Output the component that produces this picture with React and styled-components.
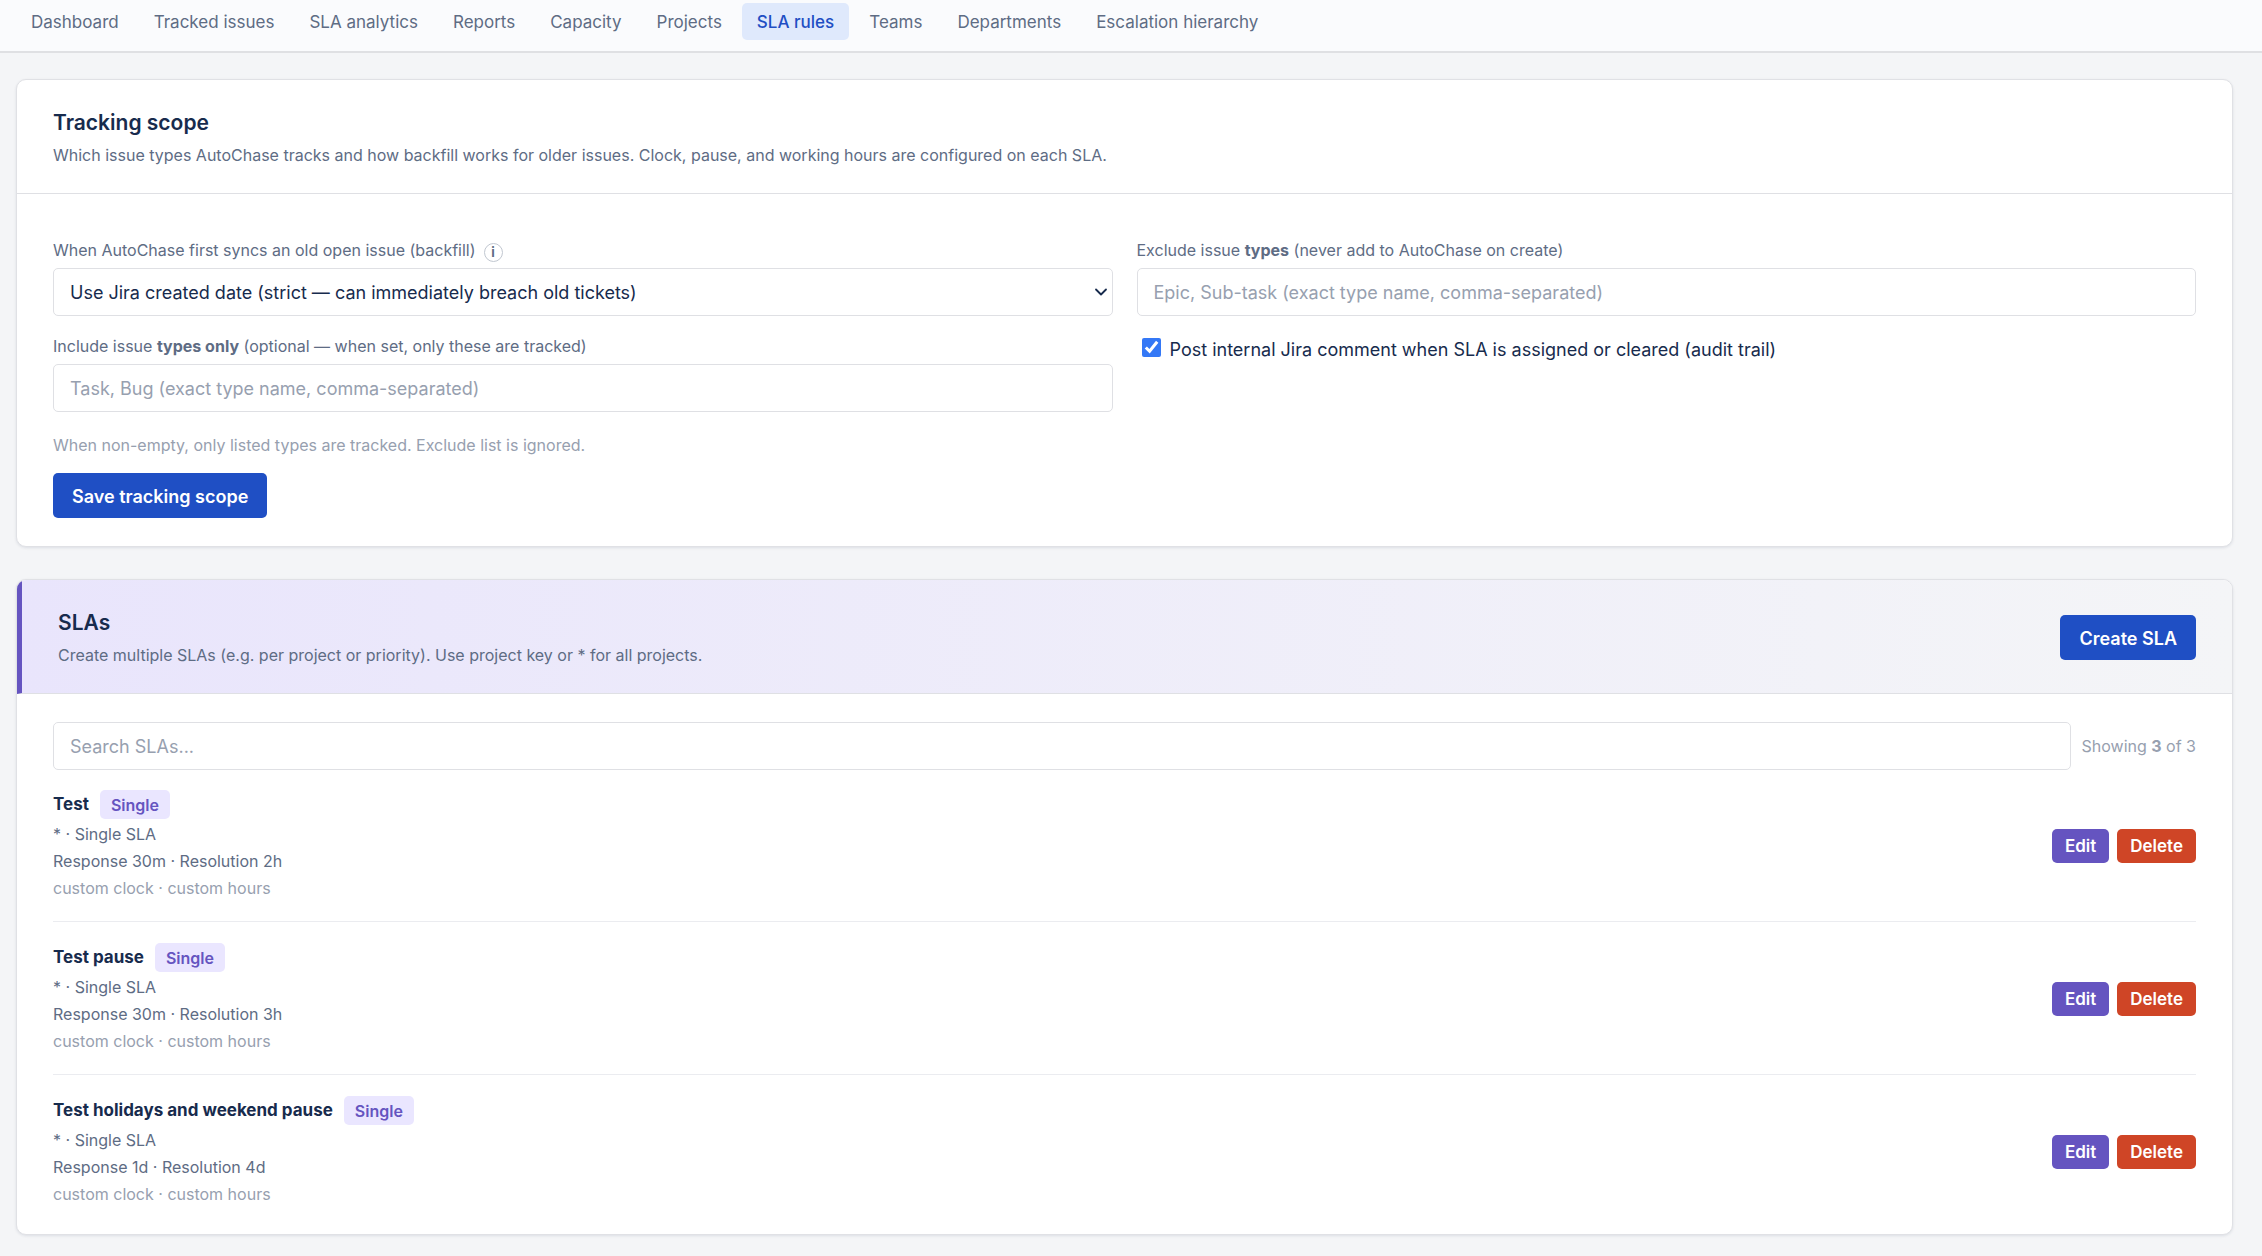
import {useState} from 'react';
import styled, {createGlobalStyle} from 'styled-components';
import {ChevronDown} from 'lucide-react';

const tabs = [
  'Dashboard',
  'Tracked issues',
  'SLA analytics',
  'Reports',
  'Capacity',
  'Projects',
  'SLA rules',
  'Teams',
  'Departments',
  'Escalation hierarchy',
];

const slas = [
  {name: 'Test', response: '30m', resolution: '2h'},
  {name: 'Test pause', response: '30m', resolution: '3h'},
  {name: 'Test holidays and weekend pause', response: '1d', resolution: '4d'},
];

function App() {
  const [search, setSearch] = useState('');
  const [audit, setAudit] = useState(true);
  const visible = slas.filter(sla =>
    sla.name.toLowerCase().includes(search.toLowerCase())
  );

  return (
    <>
      <GlobalStyle />
      <Navigation>
        {tabs.map(tab => (
          <Tab key={tab} href="#" $active={tab === 'SLA rules'}>
            {tab}
          </Tab>
        ))}
      </Navigation>
      <Main>
        <Card>
          <CardHeader>
            <div>
              <Title>Tracking scope</Title>
              <Subtitle>
                Which issue types AutoChase tracks and how backfill works for
                older issues. Clock, pause, and working hours are configured on
                each SLA.
              </Subtitle>
            </div>
          </CardHeader>
          <ScopeForm onSubmit={event => event.preventDefault()}>
            <FieldGrid>
              <div>
                <LabelRow>
                  <label htmlFor="backfill">
                    When AutoChase first syncs an old open issue (backfill)
                  </label>
                  <InfoButton type="button" aria-label="About backfill">
                    i
                  </InfoButton>
                </LabelRow>
                <SelectWrapper>
                  <Select id="backfill">
                    <option>
                      Use Jira created date (strict — can immediately breach old
                      tickets)
                    </option>
                  </Select>
                  <SelectArrow size={20} strokeWidth={2.2} />
                </SelectWrapper>
              </div>
              <div>
                <LabelRow>
                  <label htmlFor="exclude">
                    Exclude issue <b>types</b> (never add to AutoChase on create)
                  </label>
                </LabelRow>
                <Input
                  id="exclude"
                  placeholder="Epic, Sub-task (exact type name, comma-separated)"
                />
              </div>
              <div>
                <LabelRow>
                  <label htmlFor="include">
                    Include issue <b>types only</b> (optional — when set, only
                    these are tracked)
                  </label>
                </LabelRow>
                <Input
                  id="include"
                  placeholder="Task, Bug (exact type name, comma-separated)"
                />
              </div>
              <CheckLabel>
                <Checkbox
                  type="checkbox"
                  checked={audit}
                  onChange={() => setAudit(!audit)}
                />
                Post internal Jira comment when SLA is assigned or cleared
                (audit trail)
              </CheckLabel>
            </FieldGrid>
            <Hint>
              When non-empty, only listed types are tracked. Exclude list is
              ignored.
            </Hint>
            <PrimaryButton>Save tracking scope</PrimaryButton>
          </ScopeForm>
        </Card>

        <Card>
          <CardHeader $accent>
            <div>
              <Title>SLAs</Title>
              <Subtitle>
                Create multiple SLAs (e.g. per project or priority). Use project
                key or * for all projects.
              </Subtitle>
            </div>
            <PrimaryButton type="button">Create SLA</PrimaryButton>
          </CardHeader>
          <CardBody>
            <SearchRow>
              <Input
                aria-label="Search SLAs"
                placeholder="Search SLAs..."
                value={search}
                onChange={event => setSearch(event.target.value)}
              />
              <Count>
                Showing <b>{visible.length}</b> of {slas.length}
              </Count>
            </SearchRow>
            <SlaList>
              {visible.map(sla => (
                <SlaItem key={sla.name}>
                  <div>
                    <SlaName>
                      {sla.name}
                      <Badge>Single</Badge>
                    </SlaName>
                    <SlaText>* · Single SLA</SlaText>
                    <SlaText>
                      Response {sla.response} · Resolution {sla.resolution}
                    </SlaText>
                    <SlaText $muted>custom clock · custom hours</SlaText>
                  </div>
                  <Actions>
                    <SmallButton type="button" $color="#6554c0">
                      Edit
                    </SmallButton>
                    <SmallButton type="button" $color="#cf4526">
                      Delete
                    </SmallButton>
                  </Actions>
                </SlaItem>
              ))}
            </SlaList>
          </CardBody>
        </Card>
      </Main>
    </>
  );
}

const GlobalStyle = createGlobalStyle`
  * {
    box-sizing: border-box;
  }

  body {
    margin: 0;
    background-color: #f4f5f7;
    color: #172b4d;
    font-family: Inter, 'Liberation Sans', sans-serif;
    font-size: 18px;
    line-height: 27px;
  }

  button,
  input,
  select {
    font-family: inherit;
    color: inherit;
  }
`;

const Navigation = styled.nav`
  display: flex;
  gap: 5px;
  padding: 3px 16px 11px;
  background-color: #fafbfd;
  border-bottom: 2px solid #dfe0e3;
`;

const Tab = styled.a`
  padding: 6px 15px 4px;
  border-radius: 5px;
  font-size: 17px;
  font-weight: ${({$active}) => ($active ? 500 : 400)};
  color: ${({$active}) => ($active ? '#1f4fc4' : '#5e6c84')};
  background-color: ${({$active}) => ($active ? '#dfe9fc' : 'transparent')};
  text-decoration: none;
  white-space: nowrap;
`;

const Main = styled.main`
  display: grid;
  gap: 32px;
  padding: 26px 29px 22px 16px;
`;

const Card = styled.section`
  overflow: hidden;
  background-color: #fff;
  border: 1px solid #e0e1e5;
  border-radius: 10px;
  box-shadow: 0 1px 3px rgba(9, 30, 66, 0.1);
`;

const CardHeader = styled.header`
  display: flex;
  align-items: center;
  justify-content: space-between;
  padding: 28px 36px 26px;
  border-bottom: 1px solid #dfe0e4;
  ${({$accent}) =>
    $accent &&
    `
    border-left: 5px solid #6554c0;
    background: linear-gradient(90deg, #e9e5fc 0%, #f4f5f7 100%);
  `}
`;

const Title = styled.h2`
  margin: 0 0 5px;
  font-size: 21px;
  line-height: 30px;
  font-weight: 600;
`;

const Subtitle = styled.p`
  margin: 0;
  font-size: 16px;
  line-height: 24px;
  color: #5e6c84;
`;

const CardBody = styled.div`
  padding: 28px 36px 26px;
`;

const ScopeForm = styled.form`
  padding: 44px 36px 28px;
`;

const FieldGrid = styled.div`
  display: grid;
  grid-template-columns: 1fr 1fr;
  gap: 18px 24px;
`;

const LabelRow = styled.div`
  display: flex;
  align-items: center;
  gap: 8px;
  margin-bottom: 6px;
  font-size: 16px;
  line-height: 24px;
  color: #5e6c84;
`;

const InfoButton = styled.button`
  width: 19px;
  height: 19px;
  margin-top: 4px;
  padding: 0;
  border: 1px solid #c1c7d0;
  border-radius: 50%;
  background: none;
  color: #5e6c84;
  font-size: 13px;
  line-height: 17px;
  font-weight: 700;
`;

const Input = styled.input`
  display: block;
  width: 100%;
  height: 48px;
  padding: 0 16px;
  border: 1px solid #dfe0e4;
  border-radius: 5px;
  background-color: #fff;
  font-size: 18px;

  &::placeholder {
    color: #97a0af;
    opacity: 1;
  }
`;

const SelectWrapper = styled.div`
  position: relative;
`;

const Select = styled.select`
  display: block;
  appearance: none;
  width: 100%;
  height: 48px;
  padding: 0 32px 0 16px;
  border: 1px solid #dfe0e4;
  border-radius: 5px;
  background-color: #fff;
  font-size: 18px;
`;

const SelectArrow = styled(ChevronDown)`
  position: absolute;
  top: 14px;
  right: 2px;
  pointer-events: none;
`;

const CheckLabel = styled.label`
  display: flex;
  align-items: flex-start;
  gap: 9px;
  padding: 2px 0 0 5px;
`;

const Checkbox = styled.input`
  width: 19px;
  height: 19px;
  margin: 2px 0 0;
  accent-color: #3478f6;
`;

const Hint = styled.p`
  margin: 21px 0 16px;
  font-size: 16px;
  line-height: 24px;
  color: #97a0af;
`;

const PrimaryButton = styled.button`
  height: 45px;
  padding: 1px 19px 0;
  border: none;
  border-radius: 5px;
  background-color: #1f4fc4;
  color: #fff;
  font-size: 18px;
  font-weight: 600;
`;

const SearchRow = styled.div`
  display: flex;
  align-items: center;
  gap: 11px;
  margin-bottom: 20px;
`;

const Count = styled.span`
  font-size: 16px;
  color: #97a0af;
  white-space: nowrap;
`;

const SlaList = styled.ul`
  margin: 0;
  padding: 0;
  list-style: none;
`;

const SlaItem = styled.li`
  display: flex;
  align-items: center;
  justify-content: space-between;

  & + & {
    margin-top: 19px;
    padding-top: 21px;
    border-top: 1px solid #ebecf0;
  }
`;

const SlaName = styled.h3`
  display: flex;
  align-items: center;
  gap: 11px;
  margin: 0 0 2px;
  font-size: 17px;
  line-height: 29px;
  font-weight: 700;
`;

const Badge = styled.span`
  padding: 1px 11px 0;
  border-radius: 5px;
  background-color: #eae6ff;
  color: #6554c0;
  font-size: 16px;
  line-height: 28px;
  font-weight: 600;
`;

const SlaText = styled.p`
  margin: 0;
  font-size: 16px;
  line-height: 27px;
  color: ${({$muted}) => ($muted ? '#97a0af' : '#5e6c84')};
`;

const Actions = styled.div`
  display: flex;
  gap: 8px;
`;

const SmallButton = styled.button`
  height: 34px;
  padding: 0 13px;
  border: none;
  border-radius: 5px;
  background-color: ${({$color}) => $color};
  color: #fff;
  font-size: 17px;
  font-weight: 600;
`;

export default App;
